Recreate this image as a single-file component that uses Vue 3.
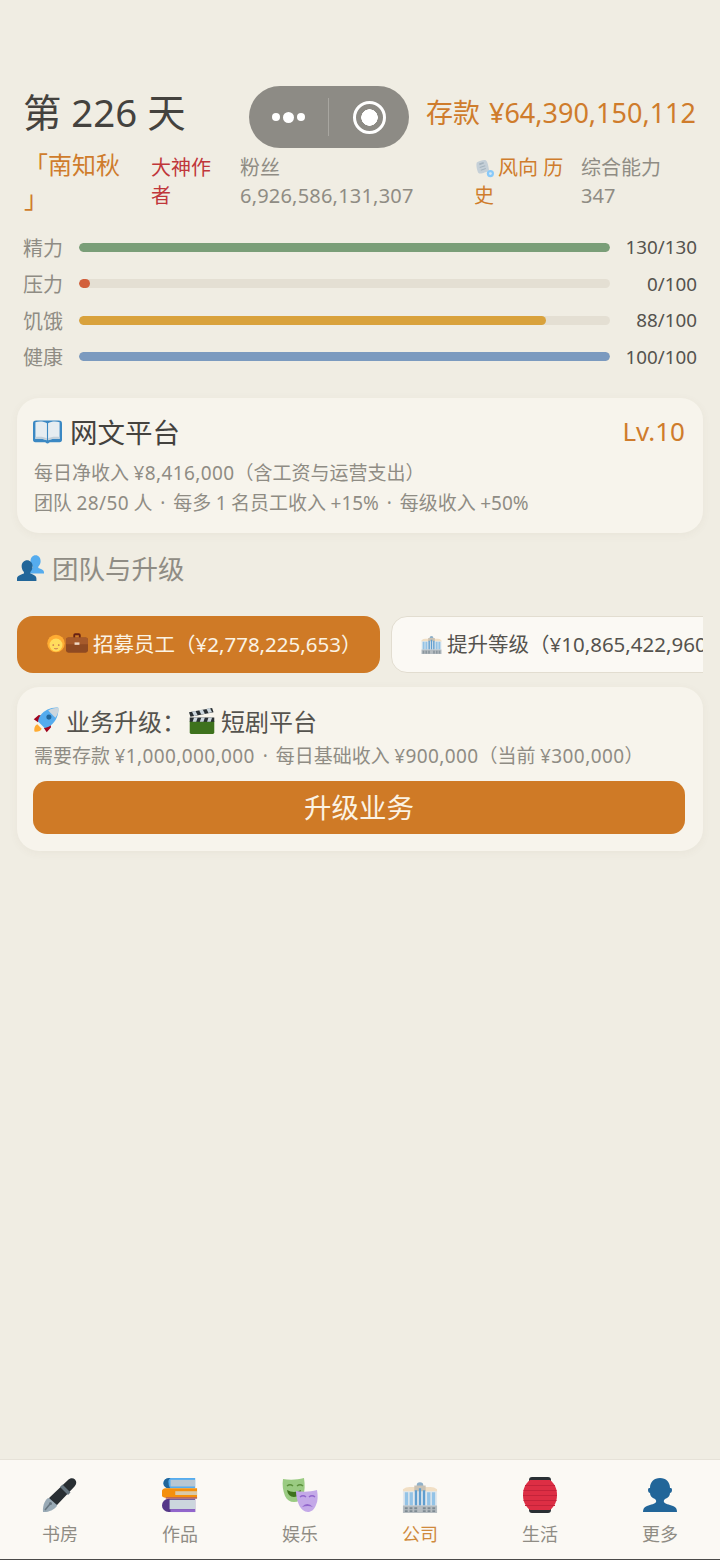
<script setup>
const bars = [
  { label: '精力', pct: 100, color: '#7a9e78', value: '130/130' },
  { label: '压力', pct: 2, color: '#d2603c', value: '0/100' },
  { label: '饥饿', pct: 88, color: '#d9a23c', value: '88/100' },
  { label: '健康', pct: 100, color: '#7b9abf', value: '100/100' }
]
</script>

<template>
  <div class="page">
    <svg class="defs" width="0" height="0" aria-hidden="true">
      <symbol id="building" viewBox="-1 -2 38 38">
        <path fill="#8fb0c8" d="M14.500 7a3.500 3.500 0 0 1 7 0v2h-7z" />
        <path fill="#f1dfc4" d="M0 11q3-2.500 7-2.500h22q4 0 7 2.500v3H0z" />
        <path fill="#c9c2b4" d="M12 7h12v10H12z" />
        <path fill="#e1e8ed" d="M0 13h36v23H0z" />
        <path fill="#93c3e6" d="M2 14h3.500v14H2zM7 14h3.500v14H7zM25.500 14H29v14h-3.500zM30.500 14H34v14h-3.500z" />
        <path fill="#5f9ecf" d="M12.500 12H15v16h-2.500zM16.800 10h2.400v18h-2.400zM21 12h2.500v16H21z" />
        <path fill="#b5bcc0" d="M0 28h36v8H0z" />
        <path fill="#7d8a92" d="M2 30h3v2H2zM7 30h3v2H7zM12 30h3v2h-3zM21 30h3v2h-3zM26 30h3v2h-3zM31 30h3v2h-3zM2 33h3v2H2zM7 33h3v2H7zM12 33h3v2h-3zM21 33h3v2h-3zM26 33h3v2h-3zM31 33h3v2h-3z" />
      </symbol>
    </svg>

    <header class="status">
      <div class="headline">
        <div class="day">第 226 天</div>
        <div class="money">存款 ¥64,390,150,112</div>
      </div>
      <div class="capsule">
        <span class="dots"><i></i><i class="big"></i><i></i></span>
        <span class="sep"></span>
        <span class="target"><i></i></span>
      </div>
      <div class="meta">
        <div class="name">「南知秋<br />」</div>
        <div class="tag">大神作者</div>
        <div class="stat">粉丝<br /><span class="fans">6,926,586,131,307</span></div>
        <div class="trend"><svg class="news" viewBox="0 0 36 36"><path fill="#c5d0d8" d="M5 8c5-3 12-5 16-4 3 1 5 10 6 17 0 3-4 4-8 5-4 2-9 3-11 1-2-3-5-14-3-19z" /><path fill="#a5b4bf" d="M9 10l8-3 1 3-8 3zM10 16l10-3 .5 2-10 3zM12 21l9-3 .5 2-9 3z" /><circle cx="29.500" cy="28" r="6.500" fill="#88c9f9" /><circle cx="29.500" cy="28" r="2.500" fill="#d5e8f5" /></svg>风向 历史</div>
        <div class="stat">综合能力<br />347</div>
      </div>
      <div class="bars">
        <div v-for="bar in bars" :key="bar.label" class="bar-row">
          <span class="bar-label">{{ bar.label }}</span>
          <span class="track"><span class="fill" :style="{ width: bar.pct + '%', background: bar.color }"></span></span>
          <span class="bar-value">{{ bar.value }}</span>
        </div>
      </div>
    </header>

    <main class="content">
      <section class="card platform">
        <div class="platform-head">
          <div class="platform-title">
            <svg class="ico-book" viewBox="0 2 36 32"><path fill="#3b88c3" d="M0 9c0-3 1-4 4-4h28c3 0 4 1 4 4v20c0 2-1 3-3 3H21c-1 0-1 1.500-3 1.500S16 32 15 32H3c-2 0-3-1-3-3z" /><path fill="#e6edf1" d="M3 7c5-1.500 11-1 14.300 1.500v21C14 27.500 8 27 3 28zM33 7c-5-1.500-11-1-14.300 1.500v21C22 27.500 28 27 33 28z" /><path fill="#c2d0da" d="M3 25.500c5-1 11-.5 14.300 1.500v2.500C14 27.500 8 27 3 28zM33 25.500c-5-1-11-.5-14.300 1.500v2.500C22 27.500 28 27 33 28z" /></svg>
            <span>网文平台</span>
          </div>
          <div class="level">Lv.10</div>
        </div>
        <p class="desc first">每日净收入 <span class="amt">¥8,416,000</span>（含工资与运营支出）</p>
        <p class="desc">团队 <span class="amt">28/50</span> 人 <span class="dot">·</span> 每多 1 名员工收入 +15% <span class="dot">·</span> 每级收入 +50%</p>
      </section>

      <h2 class="section-title">
        <svg class="ico-busts" viewBox="3 4 32 32"><path fill="#55acee" d="M35 26c0-3-3-4-6-5-1-.5-1-1.500-.5-2.500 1.500-1.500 2.500-3.500 2.500-6 0-4-2.500-7-6-7s-6 3-6 7c0 2.500 1 4.500 2.500 6 .5 1 .5 2-.5 2.500-3 1-6 2-6 5v1h20z" /><path fill="#269" d="M26 33c0-3-3.500-4.500-6.500-5.500-1-.5-1-1.500-.5-2.500 1.500-1.500 2.500-4 2.500-6.500 0-4-3-7-6.500-7s-6.500 3-6.500 7c0 2.500 1 5 2.500 6.500.5 1 .5 2-.5 2.500C7.500 28.500 3 30 3 33v3h23z" /></svg>
        <span>团队与升级</span>
      </h2>

      <div class="actions">
        <button class="action primary">
          <svg class="ico-face" viewBox="0 0 36 36"><circle cx="18" cy="18" r="17.500" fill="#ffac33" /><circle cx="18" cy="21" r="13" fill="#ffdc5d" /><circle cx="12.500" cy="21" r="1.700" fill="#c1694f" /><circle cx="23.500" cy="21" r="1.700" fill="#c1694f" /><path fill="none" stroke="#c1694f" stroke-width="1.800" d="M14.500 28q3.500 1.500 7 0" /></svg>
          <svg class="ico-case" viewBox="0 0 36 36"><path fill="#662113" d="M12 10V5a3 3 0 0 1 3-3h6a3 3 0 0 1 3 3v5h-3V5.500h-6V10z" /><rect x="0" y="9" width="36" height="25" rx="4" fill="#8f4a22" /><path fill="#a65a2b" d="M0 13a4 4 0 0 1 4-4h28a4 4 0 0 1 4 4v7H0z" /><rect x="14" y="17" width="8" height="4" fill="#f0d9c6" /></svg>
          <span>招募员工（¥2,778,225,653）</span>
        </button>
        <button class="action secondary">
          <svg class="ico-mini"><use href="#building" /></svg>
          <span>提升等级（¥10,865,422,960）</span>
        </button>
      </div>

      <section class="card upgrade">
        <div class="upgrade-title">
          <svg class="ico-inline" viewBox="0 0 36 36"><path fill="#a0041e" d="M1 17l7-6 5 1-6 9zM19 35l6-7-1-5-9 6z" /><path fill="#ffac33" d="M2 34c-1-4 1-9 4-10l6 6c-1 3-6 5-10 4z" /><path fill="#55acee" d="M35 1c-9-1-19 3-25 11-2 3-3 6-3 8l9 9c2 0 5-1 8-3C32 20 36 10 35 1z" /><path fill="#ccd6dd" d="M35 1c-5 0-10 1-14 4l10 10c3-4 5-9 4-14z" /><circle cx="22" cy="14" r="3.500" fill="#269" /></svg>
          <span>业务升级：</span>
          <svg class="ico-inline clap" viewBox="0 0 36 36"><path fill="#3e721d" d="M1 18h34v16a2 2 0 0 1-2 2H3a2 2 0 0 1-2-2z" /><path fill="#292f33" d="M1 13h34v6H1zM0 6l32-6 2 6L2 12z" /><path fill="#ccd6dd" d="M4 5l5-1 3 6-5 1zM14 3l5-1 3 6-5 1zM24 1l5-1 3 6-5 1zM7 13h5l-2 6H5zM17 13h5l-2 6h-5zM27 13h5l-2 6h-5z" /></svg>
          <span>短剧平台</span>
        </div>
        <p class="desc cost">需要存款 <span class="amt">¥1,000,000,000</span> <span class="dot">·</span> 每日基础收入 <span class="amt">¥900,000</span>（当前 <span class="amt">¥300,000</span>）</p>
        <button class="upgrade-btn">升级业务</button>
      </section>
    </main>

    <nav class="tabbar">
      <div class="tab">
        <svg class="tab-ico" viewBox="0 0 36 36"><path fill="#99aab5" d="M1 35c-.5-5 1-11 5-14l8 1 1 7c-3 4-9 6.500-14 6z" /><path d="M3 33l5-6" stroke="#66757f" stroke-width="1.500" /><circle cx="8.500" cy="26.500" r="1.500" fill="#66757f" /><path fill="#292f33" d="M7 21L26 3c2-2 5-2.500 7-.5s1.500 5-.5 7L15 28z" /><path fill="#66757f" d="M18 10l2.500-2.500 8 8L26 18z" /></svg>
        <span>书房</span>
      </div>
      <div class="tab">
        <svg class="tab-ico" viewBox="-1 -1 38 38"><path fill="#55acee" d="M6 0h28v11H6a5.500 5.500 0 0 1 0-11z" /><path fill="#226699" d="M6 0h2a5 5 0 0 0-2 5.500c0 2 .5 4 2 5.500H6a5.500 5.500 0 0 1 0-11z" /><path fill="#b8c7d3" d="M8 2h26v7H8z" /><path fill="#f4900c" d="M3 11h33v10H3a5 5 0 0 1 0-10z" /><path fill="#d9c9a8" d="M13 14h23v4H13z" /><path fill="#c1694f" d="M3 20h33v2H3z" /><path fill="#553788" d="M6 22h28v14H6a7 7 0 0 1 0-14z" /><path fill="#ccd6dd" d="M7 23h27v10H7z" /><path fill="#9266cc" d="M8 33h26v3H8z" /></svg>
        <span>作品</span>
      </div>
      <div class="tab">
        <svg class="tab-ico" viewBox="0 0 36 36"><path fill="#9acb82" d="M1 2c6 1 14 1 21-1 1 7 1 13-1 18-2 4-5 6-9 6s-7-2-9-6C1 14 0 8 1 2z" /><path fill="none" stroke="#5c913b" stroke-width="1.500" d="M5 9q3-2.500 6 0M15 9q3-2.500 6 0" /><path fill="#3e721d" d="M5 13q7 4 14 0-1 7-7 7t-7-7z" /><path fill="#c4a9e8" d="M14 14c7 1 14 1 21-1 1 6 1 11-1 15-2 5-5 7-8 7-4 0-7-3-9-7-2-5-3-9-3-14z" /><path fill="none" stroke="#9266cc" stroke-width="1.500" d="M18 20q3-2.500 6 0M27 20q3-2.500 6 0" /><path fill="#9266cc" d="M20 30q5-6 11 0-5-2-11 0z" /></svg>
        <span>娱乐</span>
      </div>
      <div class="tab active">
        <svg class="tab-ico"><use href="#building" /></svg>
        <span>公司</span>
      </div>
      <div class="tab">
        <svg class="tab-ico" viewBox="0 0 36 36"><path fill="#292f33" d="M7 3a3 3 0 0 1 3-3h16a3 3 0 0 1 3 3v3H7zM7 30h22v3a3 3 0 0 1-3 3H10a3 3 0 0 1-3-3z" /><path fill="#dd2e44" d="M8 3h20c5 4 7 9 7 15s-2 11-7 15H8c-5-4-7-9-7-15S3 7 8 3z" /><path fill="#c4233a" d="M3 8h30v1H3zM1.500 13h33v1h-33zM1 18h34v1H1zM1.500 23h33v1h-33zM3 28h30v1H3z" /></svg>
        <span>生活</span>
      </div>
      <div class="tab">
        <svg class="tab-ico" viewBox="0 0 36 36"><path fill="#269" d="M35 35c0-3-1-5-4-6-4-1.500-8-2-9-4-.5-1 0-2 1-3 3-1 5-3 5-6 1 0 2-1 2-3s-1-2-2-2c0-6-4-10-10-10S8 5 8 11c-1 0-2 0-2 2s1 3 2 3c0 3 2 5 5 6 1 1 1.500 2 1 3-1 2-5 2.500-9 4-3 1-4 3-4 6z" /></svg>
        <span>更多</span>
      </div>
    </nav>
  </div>
</template>

<style scoped>
.page {
  position: relative;
  display: flex;
  flex-direction: column;
  width: 720px;
  height: 1560px;
  overflow: hidden;
  background: #f0ede3;
  color: #44423e;
  font-family: "Noto Sans", "Noto Sans CJK SC", sans-serif;
  border-bottom: 1px solid #4a4a48;
  box-sizing: border-box;
}
.defs { position: absolute; }
.status { padding: 90px 24px 0; }
.headline {
  display: flex;
  justify-content: space-between;
  align-items: center;
  height: 46px;
  margin-bottom: 12px;
}
.day { font-size: 38.400px; color: #44423e; line-height: 44px; margin: 0 0 2px -1px; }
.money { font-size: 27px; color: #cf7c2c; line-height: 46px; word-spacing: 2px; }
.capsule {
  position: absolute;
  left: 249px;
  top: 86px;
  width: 160px;
  height: 62px;
  display: flex;
  align-items: center;
  border-radius: 31px;
  background: #8d8b85;
}
.dots { width: 79px; display: flex; justify-content: center; align-items: center; gap: 3px; }
.dots i { width: 8px; height: 8px; border-radius: 50%; background: #fff; }
.dots .big { width: 11px; height: 11px; }
.sep { width: 1px; height: 38px; background: #a8a6a0; }
.target { flex: 1; display: flex; justify-content: center; }
.target i {
  width: 33px;
  height: 33px;
  box-sizing: border-box;
  border: 3px solid #fff;
  border-radius: 50%;
  background: radial-gradient(circle, #fff 0 8px, transparent 8.500px);
}
.meta {
  display: grid;
  grid-template-columns: 111px 73px 218px 91px 115px;
  column-gap: 16px;
  align-items: center;
  height: 68px;
  font-size: 20px;
  line-height: 28px;
}
.name { font-size: 24px; line-height: 34px; color: #cf7c2c; text-spacing-trim: space-all; white-space: nowrap; }
.tag { color: #c0363a; }
.stat { color: #8f8c84; }
.fans { letter-spacing: .2px; }
.trend { color: #cf7c2c; }
.news { width: 20px; height: 20px; vertical-align: -3px; margin-right: 4px; }
.bars { margin: 13px -1px 0 -1px; }
.bar-row {
  display: flex;
  align-items: center;
  height: 36.500px;
  font-size: 20px;
}
.bar-label { width: 56px; color: #8f8c84; }
.track {
  flex: none;
  width: 531px;
  height: 9px;
  border-radius: 5px;
  background: #e4dfd3;
  overflow: hidden;
}
.fill { display: block; min-width: 11px; height: 100%; border-radius: 5px; }
.bar-value { flex: 1; text-align: right; color: #55534e; font-size: 18.800px; }
.content {
  flex: 1;
  padding: 23px 17px 0;
}
.card {
  border-radius: 22px;
  background: #f7f4ec;
  box-shadow: 0 2px 10px rgba(90, 80, 60, .05);
  padding: 0 18px 0 16px;
  box-sizing: border-box;
}
.platform { height: 135px; padding-top: 13px; }
.platform-head { display: flex; justify-content: space-between; align-items: center; height: 40px; }
.platform-title { display: flex; align-items: center; gap: 8px; font-size: 27.500px; color: #44423e; }
.ico-book { width: 29px; height: 26px; }
.level { font-size: 26px; color: #cf7c2c; }
.desc { margin: 0; font-size: 19px; line-height: 30px; color: #8f8c84; padding-left: 1px; word-spacing: -.5px; white-space: nowrap; }
.desc.first { margin-top: 7px; }
.amt { letter-spacing: .4px; }
.dot { display: inline-block; width: 12px; text-align: center; }
.section-title {
  display: flex;
  align-items: center;
  gap: 8px;
  height: 40px;
  margin: 14px 0 29px;
  font-size: 26.500px;
  font-weight: 400;
  color: #8f8c84;
}
.ico-busts { width: 27px; height: 27px; }
.actions {
  display: flex;
  gap: 11px;
  overflow: hidden;
}
.action {
  flex: none;
  display: flex;
  align-items: center;
  justify-content: flex-start;
  height: 57px;
  padding: 0 0 3px 30px;
  border-radius: 16px;
  border: 0;
  font: inherit;
  font-size: 20.500px;
  box-sizing: border-box;
}
.action.primary { width: 363px; background: #cf7a26; color: #fbf3e4; }
.action.secondary {
  width: 380px;
  padding-left: 29px;
  background: #fbf9f4;
  border: 1px solid #e2ddd0;
  color: #55534e;
}
.ico-mini { width: 21px; height: 21px; flex: none; }
.ico-face { width: 18px; height: 19px; flex: none; margin-right: 1px; }
.ico-case { width: 22px; height: 22px; flex: none; }
.action span { margin-left: 5px; white-space: nowrap; }
.upgrade { height: 164px; margin-top: 14px; padding-top: 13px; }
.upgrade-title { display: flex; align-items: center; height: 40px; font-size: 24px; color: #55534e; }
.ico-inline { width: 26px; height: 26px; margin-right: 7px; flex: none; }
.clap { margin: 2px 6px 0 3px; }
.cost { margin-top: 1px; line-height: 30px; }
.upgrade-btn {
  display: block;
  width: 100%;
  height: 53px;
  margin-top: 10px;
  padding: 0 0 3px;
  border: 0;
  border-radius: 14px;
  background: #cf7a26;
  color: #fbf3e4;
  font: inherit;
  font-size: 27.500px;
}
.tabbar {
  display: grid;
  grid-template-columns: repeat(6, 1fr);
  height: 100px;
  background: #fbf9f4;
  border-top: 1px solid #e6e2d8;
  box-sizing: border-box;
}
.tab {
  display: flex;
  flex-direction: column;
  align-items: center;
  padding-top: 17px;
  font-size: 18px;
  line-height: 26px;
  color: #8f8c84;
}
.tab.active { color: #cf8a3c; }
.tab-ico { width: 36px; height: 36px; margin-bottom: 8px; }
</style>
